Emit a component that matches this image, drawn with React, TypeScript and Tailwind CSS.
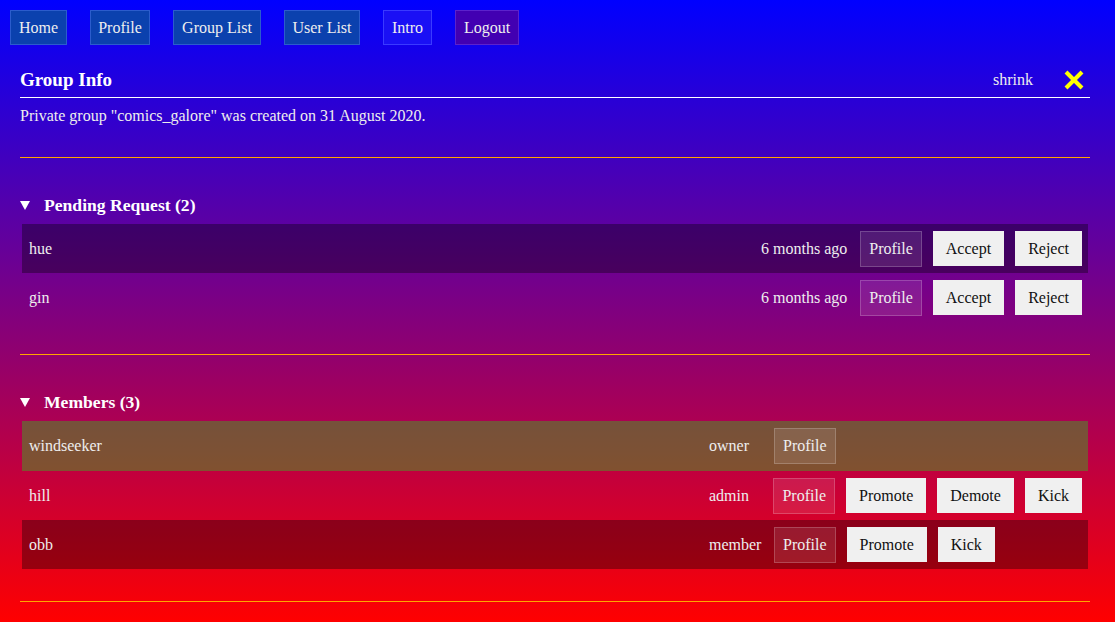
import React from "react";

const navItems = [
  { label: "Home", cls: "w-[57px] bg-[#0b41ae] border-[#2b5ccc]" },
  { label: "Profile", cls: "w-[60px] bg-[#0b41ae] border-[#2b5ccc]" },
  { label: "Group List", cls: "w-[88px] bg-[#0b41ae] border-[#2b5ccc]" },
  { label: "User List", cls: "w-[76px] bg-[#0b41ae] border-[#2b5ccc]" },
  { label: "Intro", cls: "w-[49px] bg-[#1a10f5] border-[#3a3aff]" },
  { label: "Logout", cls: "w-[64px] bg-[#4200b2] border-[#5c22cc]" },
];

const pending = [
  { name: "hue", time: "6 months ago", dark: true },
  { name: "gin", time: "6 months ago", dark: false },
];

const members = [
  { name: "windseeker", role: "owner", actions: [] as string[], bg: "bg-[rgba(50,180,30,0.45)]" },
  { name: "hill", role: "admin", actions: ["Promote", "Demote", "Kick"], bg: "" },
  { name: "obb", role: "member", actions: ["Promote", "Kick"], bg: "bg-black/35" },
];

const ProfileBtn = () => (
  <button className="h-[36px] px-2 border border-white/20 bg-white/10 text-[#eee]">Profile</button>
);

const ActionBtn = ({ children }: { children: React.ReactNode }) => (
  <button className="h-[35px] px-3 border border-[#f0f0f0] bg-[#f0f0f0] text-[#111]">{children}</button>
);

const Triangle = () => (
  <svg width="10" height="9" viewBox="0 0 10 9" className="mr-[14px]">
    <polygon points="0,0 10,0 5,9" fill="white" />
  </svg>
);

export default function App() {
  return (
    <div
      className="min-h-screen bg-[linear-gradient(to_bottom,#0000ff,#ff0000)] text-[16px] text-[#eee]"
      style={{ fontFamily: '"Liberation Serif", "Times New Roman", serif' }}
    >
      {/* nav */}
      <div className="flex gap-[23px] pt-[10px] px-[10px]">
        {navItems.map((n) => (
          <button key={n.label} className={`h-[35px] border ${n.cls} text-[#eee]`}>
            {n.label}
          </button>
        ))}
      </div>

      <div className="pl-5 pr-[25px]">
        {/* header */}
        <div className="mt-[18px] h-[35px] flex items-center border-b border-white">
          <h2 className="flex-1 text-[19px] font-bold text-white">Group Info</h2>
          <span className="text-[#eee]">shrink</span>
          <svg width="22" height="22" viewBox="0 0 22 22" className="ml-[30px] mr-[5px]">
            <line x1="3" y1="3" x2="19" y2="19" stroke="#ffff00" strokeWidth="4" />
            <line x1="19" y1="3" x2="3" y2="19" stroke="#ffff00" strokeWidth="4" />
          </svg>
        </div>
        <p className="mt-[6px]">Private group "comics_galore" was created on 31 August 2020.</p>

        <div className="mt-[29px] border-t border-[#ffa500]" />

        {/* pending */}
        <div className="mt-[34px] h-[27px] flex items-center">
          <Triangle />
          <h3 className="text-[17.6px] font-bold text-white">Pending Request (2)</h3>
        </div>
        <div className="mt-[5px] mx-[2px]">
          {pending.map((p) => (
            <div key={p.name} className={`h-[49px] flex items-center pl-[7px] pr-[6px] ${p.dark ? "bg-black/35" : ""}`}>
              <span className="flex-1">{p.name}</span>
              <span className="mr-[13px]">{p.time}</span>
              <div className="flex items-center gap-[11px]">
                <ProfileBtn />
                <ActionBtn>Accept</ActionBtn>
                <ActionBtn>Reject</ActionBtn>
              </div>
            </div>
          ))}
        </div>

        <div className="mt-[32px] border-t border-[#ffa500]" />

        {/* members */}
        <div className="mt-[34px] h-[27px] flex items-center">
          <Triangle />
          <h3 className="text-[17.6px] font-bold text-white">Members (3)</h3>
        </div>
        <div className="mt-[5px] mx-[2px]">
          {members.map((m, i) => (
            <div key={m.name} className={`${i === 0 ? "h-[50px]" : "h-[49px]"} flex items-center pl-[7px] pr-[6px] ${m.bg}`}>
              <span className="flex-1">{m.name}</span>
              <div className="w-[373px] flex items-center">
                <span className="w-[65px]">{m.role}</span>
                <div className="flex items-center gap-[11px]">
                  <ProfileBtn />
                  {m.actions.map((a) => (
                    <ActionBtn key={a}>{a}</ActionBtn>
                  ))}
                </div>
              </div>
            </div>
          ))}
        </div>

        <div className="mt-[32px] border-t border-[#ffa500]" />
      </div>
    </div>
  );
}
